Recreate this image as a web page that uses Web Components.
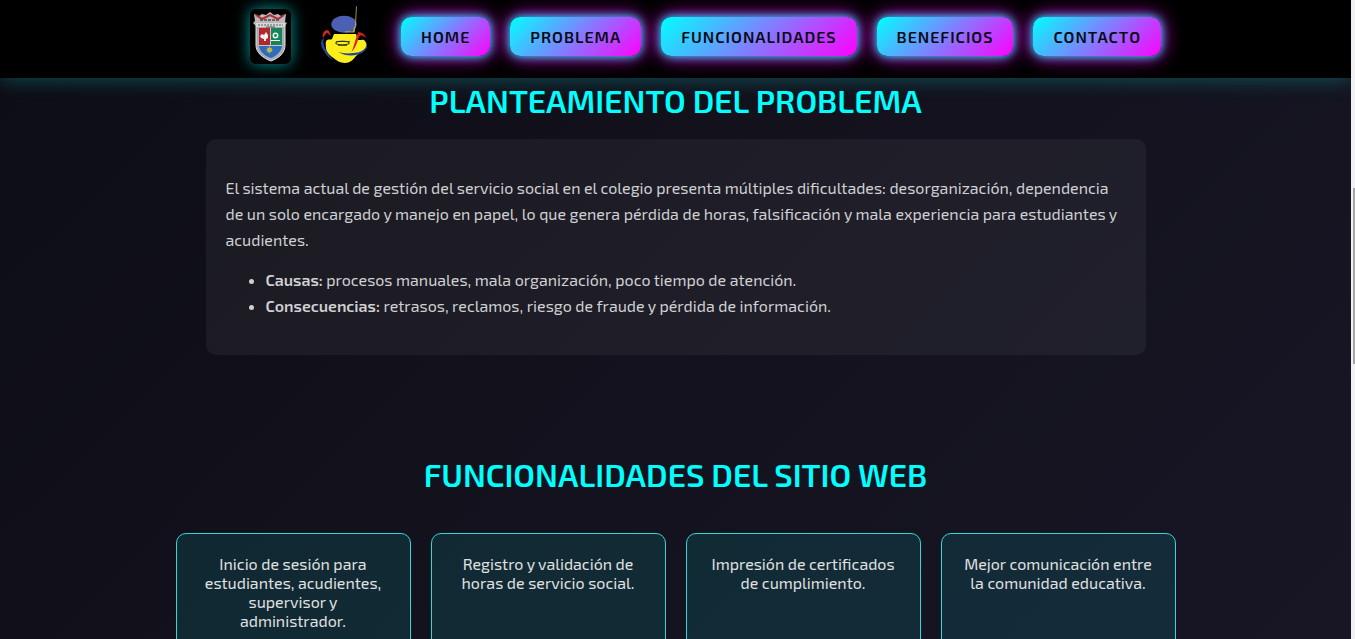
<!DOCTYPE html>
<html lang="es">
<head>
<meta charset="utf-8">
<meta name="viewport" content="width=device-width, initial-scale=1">
<title>Servicio Social</title>
<style>
  html, body { margin: 0; height: 100%; }
  body { overflow: hidden; font-family: "Exo 2", Roboto, "Open Sans", sans-serif; font-size: 16px; color: #e0e0e0; background: #0f0f15; }
</style>
</head>
<body>
<site-page>
  <site-header slot="header">
    <nav-link href="#home">Home</nav-link>
    <nav-link href="#problema">Problema</nav-link>
    <nav-link href="#funcionalidades">Funcionalidades</nav-link>
    <nav-link href="#beneficios">Beneficios</nav-link>
    <nav-link href="#contacto">Contacto</nav-link>
  </site-header>
  <page-section id="problema" heading="Planteamiento del Problema">
    <problem-panel></problem-panel>
  </page-section>
  <page-section id="funcionalidades" heading="Funcionalidades del Sitio Web">
    <card-grid>
      <feature-card>Inicio de sesión para estudiantes, acudientes, supervisor y administrador.</feature-card>
      <feature-card>Registro y validación de horas de servicio social.</feature-card>
      <feature-card>Impresión de certificados de cumplimiento.</feature-card>
      <feature-card>Mejor comunicación entre la comunidad educativa.</feature-card>
    </card-grid>
  </page-section>
</site-page>

<script>
  const define = (name, html, setup) => {
    const template = document.createElement('template');
    template.innerHTML = html;
    customElements.define(name, class extends HTMLElement {
      connectedCallback() {
        if (this.shadowRoot) return;
        const root = this.attachShadow({ mode: 'open' });
        root.append(template.content.cloneNode(true));
        if (setup) setup(this, root);
      }
    });
  };

  define('site-page', `
    <style>
      :host { display: grid; grid-template-columns: minmax(0, 1fr) 4px; height: 100vh; }
      .view { display: flex; flex-direction: column; overflow: hidden; background: linear-gradient(135deg, #0d0d15, #181625); }
      main { display: flex; flex-direction: column; gap: 100px; padding-top: 3px; }
      .track { background: #f1f1f4; padding: 188px 0 0 2px; }
      .thumb { height: 176px; background: #a5a5a5; }
    </style>
    <div class="view">
      <slot name="header"></slot>
      <main><slot></slot></main>
    </div>
    <div class="track"><div class="thumb"></div></div>`);

  define('site-header', `
    <style>
      :host { display: block; position: relative; z-index: 1; background: #000; box-shadow: 0 0 20px rgba(0, 255, 255, .3); }
      header { display: flex; justify-content: center; align-items: center; height: 78px; box-sizing: border-box; padding: 0 0 5px 60px; }
      nav { display: flex; gap: 20px; margin-left: 29px; }
      school-crest { margin-right: 25px; }
    </style>
    <header>
      <school-crest></school-crest>
      <mascot-logo></mascot-logo>
      <nav><slot></slot></nav>
    </header>`);

  define('nav-link', `
    <style>
      :host { display: block; }
      a { display: block; padding: 10px 20px; border-radius: 10px; line-height: 19px; font-weight: 600; letter-spacing: 1px; text-transform: uppercase; text-decoration: none; color: #0a0a14;
          background: linear-gradient(135deg, #0ff, #f0f); box-shadow: 0 0 10px #0ff, 0 0 20px #f0f; }
    </style>
    <a><slot></slot></a>`, (host, root) => root.querySelector('a').href = host.getAttribute('href'));

  define('school-crest', `
    <style>
      :host { display: block; width: 41px; height: 55px; border-radius: 6px; background: #000; box-shadow: 0 0 15px rgba(0, 255, 255, .6); }
      svg { display: block; }
    </style>
    <svg width="41" height="55" viewBox="0 0 41 55" role="img" aria-label="Escudo del colegio">
      <path d="M6 15h29v21c0 8-6 13-14 16C13 49 6 44 6 36z" fill="#a9acb0" stroke="#e0e0e0"/>
      <path d="M9 19h11v17H9z" fill="#b4262d"/>
      <path d="M21 19h11v17H21z" fill="#16845a"/>
      <path d="M9 37h23c-1 6-6 10-11 12C15 47 10 43 9 37z" fill="#2b6bc0"/>
      <path d="M20 18h1v19h-1zM9 36h23v1H9z" fill="#c8c8c8"/>
      <path d="M10 27l2-2 2 1 2-3 2 3v3l-2 1v2h-2v-2l-3-1z" fill="#f4eeee"/>
      <circle cx="25.500" cy="26.500" r="2.200" fill="none" stroke="#e9f2ec" stroke-width="1.500"/>
      <path d="M21 31h9v1h-9z" fill="#e9f2ec"/>
      <circle cx="19.500" cy="41" r="2.400" fill="#d9cc35"/>
      <path d="M19.500 37v8M15.500 41h8M16.800 38.300l5.400 5.400M22.200 38.300l-5.400 5.400" stroke="#b6b04a" stroke-width=".6"/>
      <path d="M4 5l5 2 3-2 4 1 4-3 4 3 4-1 3 2 5-2-1 8 2 1-2 3H6l-3-3 2-2z" fill="#b9b9bc"/>
      <path d="M6 6l6 4 8-4 8 4 6-4" fill="none" stroke="#b32d35" stroke-width="2"/>
      <path d="M10 11h20" stroke="#54484c" stroke-width="1.500" stroke-dasharray="3 1"/>
      <path d="M6 14h29v4H6z" fill="#d8d8d8"/>
      <path d="M8 16h25" stroke="#858585" stroke-width="1.500" stroke-dasharray="2 1"/>
      <path d="M16 18h9" stroke="#555"/>
    </svg>`);

  define('mascot-logo', `
    <style>
      :host { display: block; width: 56px; height: 65px; }
      svg { display: block; }
    </style>
    <svg width="56" height="62" viewBox="0 0 56 62" role="img" aria-label="Logo del servicio social">
      <path d="M18 30h22l2 6c3 0 6-1 7 1 1 2 3 4 1 7-3 3-7 5-10 8-3 4-6 7-11 7s-9-3-13-6c-3-3-6-5-6-9 0-3-1-6 1-8 2-1 4 0 5-1z" fill="#fbee1b"/>
      <ellipse cx="28" cy="20.300" rx="12.700" ry="8.500" fill="#4b60b4"/>
      <path d="M40 2l.8.500-.8 18-1.500 8H29v-1.200h7.500l2.500-6z" fill="#b3a646"/>
      <path d="M8 34c-4 2-4 8 0 13 2 4 5 7 9 9-4-5-6-8-8-12-2-4-2-7-1-10z" fill="#24439c"/>
      <path d="M50 38c2 7-5 11-13 11-6 1-11 0-15-1 9 5 18 4 24 1 5-3 6-7 4-11z" fill="#24439c"/>
      <path d="M7 34c-1-4 1-8 4-8 2 0 3 3 4 6-2-1-3-3-4-3s-2 2-4 5z" fill="#cf2422"/>
      <path d="M35.500 48c3-6 4-15 7-20 3 0 6 2 8 6-3-2-5-3-7-2-2 4-3 11-8 16z" fill="#cf2422"/>
      <ellipse cx="26.500" cy="39" rx="7" ry="1.800" fill="none" stroke="#222"/>
      <path d="M20 37.500h14M22 41.500h9" stroke="#222" stroke-width=".7"/>
    </svg>`);

  define('page-section', `
    <style>
      :host { display: block; padding: 0 20px; }
      h2 { margin: 0 0 19px; font-size: 32px; line-height: 39px; font-weight: 600; text-align: center; text-transform: uppercase; color: #0ff; }
    </style>
    <h2></h2><slot></slot>`, (host, root) => root.querySelector('h2').textContent = host.getAttribute('heading'));

  define('problem-panel', `
    <style>
      :host { display: block; box-sizing: border-box; max-width: 940px; margin: 0 auto; padding: 36px 20px; border-radius: 10px; background: rgba(255, 255, 255, .05); line-height: 26px; color: #d0d0d2; }
      p { margin: 0 0 14px; }
      ul { margin: 0; padding-left: 40px; }
      strong { font-weight: 600; }
    </style>
    <p>El sistema actual de gestión del servicio social en el colegio presenta múltiples dificultades: desorganización, dependencia de un solo encargado y manejo en papel, lo que genera pérdida de horas, falsificación y mala experiencia para estudiantes y acudientes.</p>
    <ul>
      <li><strong>Causas:</strong> procesos manuales, mala organización, poco tiempo de atención.</li>
      <li><strong>Consecuencias:</strong> retrasos, reclamos, riesgo de fraude y pérdida de información.</li>
    </ul>`);

  define('card-grid', `
    <style>
      :host { display: grid; grid-template-columns: repeat(auto-fit, minmax(200px, 1fr)); gap: 20px; max-width: 1000px; margin: 39px auto 0; }
    </style>
    <slot></slot>`);

  define('feature-card', `
    <style>
      :host { display: block; box-sizing: border-box; padding: 20px; min-height: 140px; border: 1px solid #2fd9d4; border-radius: 10px; background: rgba(0, 255, 255, .1); line-height: 19px; text-align: center; }
    </style>
    <slot></slot>`);
</script>
</body>
</html>
